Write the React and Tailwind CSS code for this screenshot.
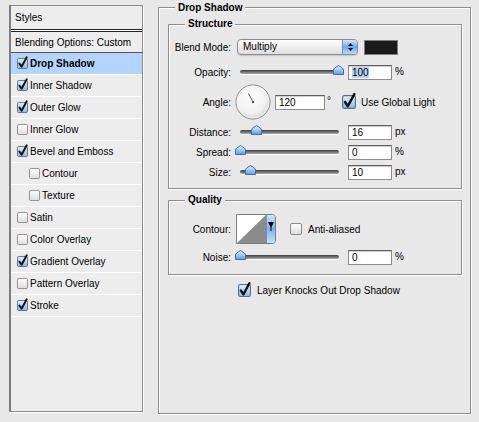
import { useId } from 'react';

const styles = [
  { name: 'Drop Shadow', on: true, selected: true },
  { name: 'Inner Shadow', on: true },
  { name: 'Outer Glow', on: true },
  { name: 'Inner Glow', on: false },
  { name: 'Bevel and Emboss', on: true },
  { name: 'Contour', on: false, indent: true },
  { name: 'Texture', on: false, indent: true },
  { name: 'Satin', on: false },
  { name: 'Color Overlay', on: false },
  { name: 'Gradient Overlay', on: true },
  { name: 'Pattern Overlay', on: false },
  { name: 'Stroke', on: true },
];

function useSvgId() {
  return 'g' + useId().replace(/[^a-zA-Z0-9]/g, '');
}

function Checkbox({ size = 11, checked }) {
  const id = useSvgId();
  return (
    <svg width={size} height={size} viewBox="0 0 12 12" className="shrink-0 overflow-visible">
      <defs>
        <linearGradient id={id} x1="0" y1="0" x2="0" y2="1">
          <stop offset="0" stopColor={checked ? '#e6f0fc' : '#ffffff'} />
          <stop offset="1" stopColor={checked ? '#8db6e6' : '#dcdcdc'} />
        </linearGradient>
      </defs>
      <rect x="0.5" y="0.5" width="11" height="11" rx="1.5" fill={`url(#${id})`} stroke={checked ? '#566f90' : '#8a8a8a'} />
      {checked && (
        <path d="M2.6 6 L5 9.6 L10.6 -0.8" fill="none" stroke="#111" strokeWidth="2.1" strokeLinecap="round" strokeLinejoin="round" />
      )}
    </svg>
  );
}

function Thumb() {
  const id = useSvgId();
  return (
    <svg width="11" height="10" viewBox="0 0 11 10">
      <defs>
        <linearGradient id={id} x1="0" y1="0" x2="0" y2="1">
          <stop offset="0" stopColor="#e8f3ff" />
          <stop offset="1" stopColor="#5f9be6" />
        </linearGradient>
      </defs>
      <path d="M0.5 9.5 V5.2 Q0.5 3.9 1.7 3 L5.5 0.5 L9.3 3 Q10.5 3.9 10.5 5.2 V9.5 Z" fill={`url(#${id})`} stroke="#3f6ca6" />
    </svg>
  );
}

function Slider({ at }) {
  return (
    <div className="relative ml-[5px] w-[104px] h-[20px] shrink-0">
      <div className="absolute left-[4px] top-[8px] w-[99px] h-[4px] rounded-full bg-linear-to-b from-[#3e3e3e] to-[#a9a9a9] shadow-[0_1px_0_#fff]" />
      <div className="absolute top-[3px]" style={{ left: at }}>
        <Thumb />
      </div>
    </div>
  );
}

function Field({ w = 44, children }) {
  return (
    <div
      className="h-[15px] bg-white border border-[#8d8d8d] border-t-[#5e5e5e] shadow-[inset_0_1px_1px_rgba(0,0,0,0.2)] pl-[3px] leading-[13px] shrink-0"
      style={{ width: w }}
    >
      {children}
    </div>
  );
}

function Label({ children }) {
  return <div className="w-[62px] text-right shrink-0">{children}</div>;
}

function SliderRow({ label, at, value, unit, highlight }) {
  return (
    <div className="flex items-center h-[20px]">
      <Label>{label}</Label>
      <Slider at={at} />
      <div className="ml-[8px]">
        <Field>{highlight ? <span className="bg-[#b5d5ff]">{value}</span> : value}</Field>
      </div>
      <div className="ml-[3px] self-start mt-[2px]">{unit}</div>
    </div>
  );
}

function Group({ title, className, children }) {
  return (
    <div className={`flex flex-col border border-[#8e8e8e] shadow-[inset_1px_1px_0_#fff,1px_1px_0_#fff] ${className}`}>
      <div className="self-start ml-[16px] -mt-[8px] h-[14px] leading-[14px] px-[3px] bg-[#e8e8e8] font-bold">{title}</div>
      {children}
    </div>
  );
}

function AngleDial() {
  return (
    <svg width="36" height="36" viewBox="0 0 36 36" className="ml-[4px] shrink-0">
      <defs>
        <radialGradient id="dialfill" cx="0.45" cy="0.4" r="0.6">
          <stop offset="0" stopColor="#ffffff" />
          <stop offset="0.7" stopColor="#f1f1f1" />
          <stop offset="1" stopColor="#d4d4d4" />
        </radialGradient>
      </defs>
      <circle cx="18" cy="18" r="17" fill="url(#dialfill)" stroke="#8a8a8a" />
      <circle cx="18" cy="18" r="16" fill="none" stroke="#fff" strokeOpacity="0.7" />
      <line x1="18" y1="18" x2="13.5" y2="9.5" stroke="#555" strokeWidth="1" />
      <rect x="17" y="17" width="2" height="2" fill="#555" />
    </svg>
  );
}

function ContourPicker() {
  return (
    <div className="ml-[5px] flex w-[40px] h-[30px] border border-[#7d7d7d] rounded-r-[4px] overflow-hidden shrink-0">
      <svg width="29" height="28" viewBox="0 0 29 28" className="shrink-0">
        <rect width="29" height="28" fill="#fff" />
        <polygon points="0,28 29,0 29,28" fill="#8c8c8c" />
      </svg>
      <div className="flex-1 flex justify-center pt-[7px] bg-linear-to-b from-[#cfe4fb] via-[#7fb2ec] to-[#c7e0fb] border-l border-[#6b8fbf]">
        <svg width="6" height="9" viewBox="0 0 6 9">
          <path d="M0 0 H6 L3.5 5 V9 H2.5 V5 Z" fill="#000" />
        </svg>
      </div>
    </div>
  );
}

export default function App() {
  return (
    <div className="w-[479px] h-[422px] bg-[#e8e8e8] flex items-start overflow-hidden font-['Liberation_Sans',Arial,sans-serif] text-[10px] text-black">
      <div className="ml-[9px] mt-[5px] w-[134px] h-[407px] bg-[#ededed] border border-[#8a8a8a] border-l-2 border-l-[#7c7c7c] shadow-[1px_1px_0_#fff] flex flex-col shrink-0">
        <div className="h-[23px] pl-[4px] pb-[1px] flex items-center">Styles</div>
        <div className="h-[3px] border-y border-[#222] bg-white" />
        <div className="h-[21px] pl-[4px] flex items-center border-b border-[#555]">Blending Options: Custom</div>
        {styles.map((s) => (
          <div
            key={s.name}
            className={`h-[22px] flex items-center border-b border-white ${s.indent ? 'pl-[18px]' : 'pl-[6px]'} ${s.selected ? 'bg-[#b5d4fd] font-bold' : ''}`}
          >
            <Checkbox checked={s.on} />
            <span className="ml-[2px]">{s.name}</span>
          </div>
        ))}
      </div>

      <div className="ml-[15px] mt-[7px] w-[313px] h-[407px] border border-[#8e8e8e] shadow-[inset_1px_1px_0_#fff,1px_1px_0_#fff] flex flex-col shrink-0">
        <div className="self-start ml-[16px] -mt-[7px] h-[14px] leading-[14px] px-[3px] bg-[#e8e8e8] font-bold">Drop Shadow</div>

        <Group title="Structure" className="mt-[9px] ml-[9px] mr-[8px] pb-[6px]">
          <div className="mt-[6px] flex items-center h-[20px]">
            <Label>Blend Mode:</Label>
            <div className="ml-[6px] w-[121px] h-[16px] flex rounded-[4px] border border-[#8c8c8c] bg-linear-to-b from-white to-[#dedede] shadow-[0_1px_1px_rgba(0,0,0,0.15)] overflow-hidden shrink-0">
              <div className="flex-1 pl-[5px] leading-[14px]">Multiply</div>
              <div className="w-[15px] flex flex-col items-center justify-center gap-[2px] bg-linear-to-b from-[#d3e7fc] via-[#6fa7ea] to-[#bcd9fa] border-l border-[#6a8fc0]">
                <svg width="5" height="3" viewBox="0 0 5 3"><path d="M2.5 0 L5 3 H0 Z" fill="#000" /></svg>
                <svg width="5" height="3" viewBox="0 0 5 3"><path d="M0 0 H5 L2.5 3 Z" fill="#000" /></svg>
              </div>
            </div>
            <div className="ml-[6px] w-[34px] h-[15px] border border-[#7f7f7f] bg-[#1a1a1a] shrink-0" />
          </div>

          <div className="mt-[5px]">
            <SliderRow label="Opacity:" at={96.5} value="100" unit="%" highlight />
          </div>

          <div className="flex items-center h-[40px]">
            <Label>Angle:</Label>
            <AngleDial />
            <div className="ml-[4px]">
              <Field w={50}>120</Field>
            </div>
            <div className="ml-[2px] self-start mt-[11px]">°</div>
            <div className="ml-[11px] flex items-center">
              <Checkbox size={14} checked />
            </div>
            <div className="ml-[5px]">Use Global Light</div>
          </div>

          <SliderRow label="Distance:" at={14.5} value="16" unit="px" />
          <SliderRow label="Spread:" at={-1.5} value="0" unit="%" />
          <SliderRow label="Size:" at={8.5} value="10" unit="px" />
        </Group>

        <Group title="Quality" className="mt-[11px] ml-[9px] mr-[8px] pb-[7px]">
          <div className="mt-[7px] flex items-center h-[30px]">
            <Label>Contour:</Label>
            <ContourPicker />
            <div className="ml-[14px] flex items-center">
              <Checkbox size={12} checked={false} />
            </div>
            <div className="ml-[6px]">Anti-aliased</div>
          </div>
          <div className="mt-[3px]">
            <SliderRow label="Noise:" at={-1.5} value="0" unit="%" />
          </div>
        </Group>

        <div className="mt-[7px] h-[16px] pl-[79px] flex items-center">
          <Checkbox size={13} checked />
          <div className="ml-[6px]">Layer Knocks Out Drop Shadow</div>
        </div>
      </div>
    </div>
  );
}
